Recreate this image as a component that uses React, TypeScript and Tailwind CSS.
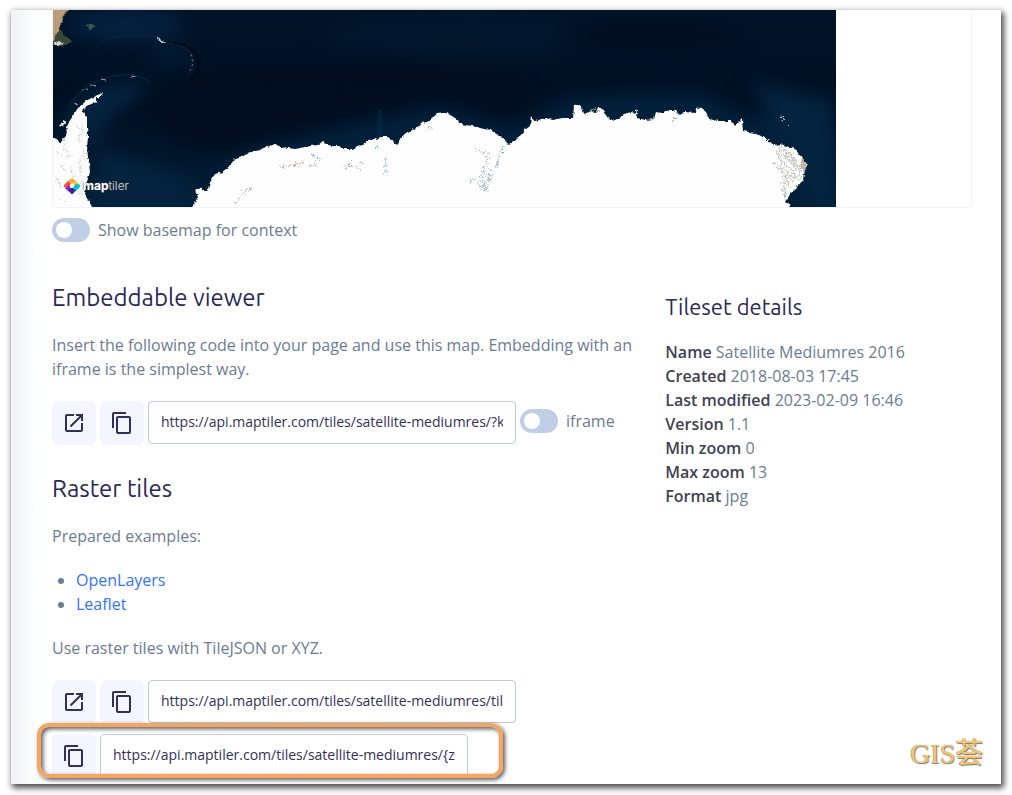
import React from "react";

const OPEN =
  "M19 19H5V5h7V3H5c-1.11 0-2 .9-2 2v14c0 1.1.89 2 2 2h14c1.1 0 2-.9 2-2v-7h-2v7zM14 3v2h3.59l-9.83 9.83 1.41 1.41L19 6.41V10h2V3h-7z";
const COPY =
  "M16 1H4c-1.1 0-2 .9-2 2v14h2V3h12V1zm3 4H8c-1.1 0-2 .9-2 2v14c0 1.1.9 2 2 2h11c1.1 0 2-.9 2-2V7c0-1.1-.9-2-2-2zm0 16H8V7h11v14z";

function IconButton({ label, path }: { label: string; path: string }) {
  return (
    <button
      type="button"
      aria-label={label}
      className="flex size-11 shrink-0 items-center justify-center rounded-md bg-[#f3f6ff] text-[#323058]"
    >
      <svg viewBox="0 0 24 24" className="size-6" fill="currentColor" aria-hidden="true">
        <path d={path} />
      </svg>
    </button>
  );
}

function UrlInput({ label, value }: { label: string; value: string }) {
  return (
    <input
      type="text"
      readOnly
      aria-label={label}
      defaultValue={value}
      className="h-[43px] w-[368px] min-w-0 rounded border border-[#b9cae4] bg-white px-3 pb-0.5 text-sm text-[#323058] outline-none"
    />
  );
}

function Switch({ id, label }: { id: string; label: string }) {
  return (
    <div className="flex items-center gap-2">
      <input
        id={id}
        type="checkbox"
        role="switch"
        className="flex h-6 w-[38px] shrink-0 appearance-none items-center rounded-full bg-[#c1cfe6] px-1 before:size-4 before:rounded-full before:bg-white before:content-['']"
      />
      <label htmlFor={id}>{label}</label>
    </div>
  );
}

function SatelliteMap() {
  return (
    <svg
      viewBox="53 10 783 197"
      className="block w-[783px] max-w-full"
      role="img"
      aria-label="Satellite map"
    >
      <defs>
        <linearGradient id="sea" x1="0" y1="0" x2="0" y2="1">
          <stop offset="0" stopColor="#021329" />
          <stop offset="0.5" stopColor="#010e20" />
          <stop offset="1" stopColor="#02203b" />
        </linearGradient>
        <filter id="soft" x="-50%" y="-50%" width="200%" height="200%" colorInterpolationFilters="sRGB">
          <feGaussianBlur stdDeviation="9" />
        </filter>
        <filter id="rough" x="-5%" y="-5%" width="110%" height="110%" colorInterpolationFilters="sRGB">
          <feTurbulence type="fractalNoise" baseFrequency="0.25" numOctaves="2" seed="4" result="n" />
          <feDisplacementMap in="SourceGraphic" in2="n" scale="4" xChannelSelector="R" yChannelSelector="G" />
          <feGaussianBlur stdDeviation="0.35" />
        </filter>
        <filter id="speckle" x="-5%" y="-5%" width="110%" height="110%" colorInterpolationFilters="sRGB">
          <feTurbulence type="fractalNoise" baseFrequency="0.4" numOctaves="2" seed="9" result="n" />
          <feDisplacementMap in="SourceGraphic" in2="n" scale="9" xChannelSelector="R" yChannelSelector="G" />
          <feGaussianBlur stdDeviation="0.5" />
        </filter>
      </defs>
      <rect x="53" y="10" width="783" height="197" fill="url(#sea)" />
      <g filter="url(#soft)">
        <ellipse cx="125" cy="25" rx="60" ry="16" fill="#04213f" />
        <path d="M60 125 Q80 80 145 80 L140 100 Q105 110 100 150 L95 210 H185 L190 180 L115 155Z" fill="#04233f" />
        <ellipse cx="170" cy="55" rx="24" ry="10" fill="#031c36" />
        <ellipse cx="250" cy="120" rx="90" ry="35" fill="#010d1f" />
        <path d="M205 175 L240 150 L325 130 L440 105 L510 128 L570 95 L700 90 L745 115 L840 140 V210 H805 L790 145Z" fill="#02203b" />
        <ellipse cx="470" cy="35" rx="150" ry="20" fill="#03172e" />
        <ellipse cx="350" cy="85" rx="170" ry="17" fill="#010c1e" />
        <ellipse cx="650" cy="35" rx="90" ry="15" fill="#010e20" />
        <path d="M750 80 L836 100 V207 H808Z" fill="#03233f" />
      </g>
      <g fill="none" strokeLinecap="round">
        <path d="M175 43 Q195 46 198 60 Q200 74 191 79" stroke="#000713" strokeWidth="3" opacity="0.7" />
        <path d="M100 42 Q125 31 155 37 M168 44 Q190 44 194 60 Q196 70 188 75" stroke="#0b2d4c" strokeWidth="1" opacity="0.6" />
        <path d="M191 55 L193 63 L190 71" stroke="#6d8798" strokeWidth="1" strokeDasharray="1 4" />
        <path d="M70 105 Q85 82 113 76 Q135 72 150 82" stroke="#143751" strokeWidth="1.5" opacity="0.4" />
        <path d="M379 137 L380 112" stroke="#083253" strokeWidth="5" opacity="0.4" />
      </g>
      <g filter="url(#rough)">
        <path d="M50 8H70L66 14L63 19L60 28L64 35L72 41L66 45L58 46L50 46Z" fill="#394936" />
        <path d="M50 8H70L64 14L62 20L58 31L53 40H50Z" fill="#b99d7b" />
        <path d="M54 42L60 41L64 43L58 46L53 45Z" fill="#d5d5cc" />
        <path d="M85 25L91 24L96 26L91 29Z" fill="#44534a" />
        <path d="M156 37L160 38L165 42L163 43L159 41Z" fill="#b3bfc6" />
        <path d="M131 76L136 77M101 79L106 80M91 85L96 86M82 90L88 89M74 103L79 105" stroke="#8e9ca3" strokeWidth="1" />
        <path d="M59 126L64 120L66 121L63 127Z" fill="#e8edef" />
        <path
          d="M50 137L55 138L59 143L62 141L66 136L67 126L72 117L78 108L86 101L95 96L103 93L101 96L96 99L97 102L88 105L82 111L87 117V128L88 136L87 150L89 163L90 172L86 185L85 195L94 210H50Z"
          fill="#fdfdfd"
        />
        <path
          d="M190 210L195 203L198 196L195 190L200 188L207 191L211 180L215 174L222 172L230 166L233 160L242 157L248 153L260 149L270 146L275 144L281 147L295 149L310 146L318 145L322 142L328 145L333 146L339 146L343 149L352 149L363 145L368 141L375 139L381 137L388 137L393 141L397 146L399 141L401 137L410 131L419 127L421 123L427 122L432 118L437 114L446 113L452 116L458 120L461 124L472 126L484 129L492 130L496 135L503 137L506 143L510 144L515 141L520 136L525 130L530 126L531 116L535 121L545 118L553 120L562 118L573 118L574 106L578 104L582 107L584 114L591 111L596 113L598 107L604 110L607 117L614 121L618 118L624 114L631 112L635 113L638 109L637 118L645 120L654 119L656 112L662 113L669 110L675 110L680 115L684 112L696 113L697 107L705 111L709 119L718 121L728 121L732 121L735 126L742 119L743 131L755 133L765 138L774 145L781 144L795 149L802 158L807 163L804 173L803 180L797 187L790 194L786 202L790 205L788 210Z"
          fill="#fefefe"
        />
        <path d="M802 158L807 163L804 172L800 167Z" fill="#c3b5a6" />
      </g>
      <g fill="none" filter="url(#speckle)" strokeWidth="1">
        <path
          d="M776 150L783 163M779 149L787 161M784 151L799 170M778 157L786 166L794 172M789 153L801 169M775 162L790 184M784 170L796 182M783 178L790 189M782 187L786 199M795 162L801 178M790 167L798 180M778 146L792 155"
          stroke="#b0b0b0"
        />
        <path d="M784 155L797 166M781 166L792 180M788 160L801 172M783 182L786 194M793 175L801 181" stroke="#d8d5d0" strokeWidth="2" />
        <path d="M56 150L62 156M64 143L68 158M78 124L80 143M83 120L82 135M59 163L66 172M79 158L81 178M54 175L62 188M70 165L74 178M58 196L64 202M82 180L81 195M84 150L84 160" stroke="#d0d1d2" />
        <path d="M281 167L290 165L298 164L304 162M306 165L312 166L316 162M343 169L350 166L358 168M352 162L348 166M477 151L489 153M487 155L488 163M587 114L594 109L600 112M427 130L432 126M240 195L253 187M236 202L243 196M672 121L677 116" stroke="#b5a99f" />
        <path d="M310 153L319 159M321 160L316 167M376 144L377 149M385 158L386 164L386 174M361 162L362 168M488 159L483 170L479 178M467 181L478 179L485 177M482 178L486 190M489 169L490 183M503 146L500 155L496 166M476 183L485 190M498 161L496 168" stroke="#8fb4c9" />
        <path d="M478 184L484 188M491 173V182M487 185L487 191M484 172L488 180L483 184" stroke="#b6aaa5" />
        <path d="M781 117L785 120M788 124L790 126" stroke="#cad6df" />
      </g>
    </svg>
  );
}

function MapLogo() {
  return (
    <div className="absolute bottom-3 left-2.5 flex items-center gap-0.5">
      <svg viewBox="0 0 18 18" className="size-[18px]" aria-hidden="true">
        <path d="M9 0L17 6.5Q19 9 16 12L9 18L2 12Q-1 9 1 6.5Z" fill="#fff" opacity="0.75" />
        <path d="M9 1L13 4L9 8L5 4Z" fill="#fbb03b" />
        <path d="M13 4L16.5 7.5L13 11L9 8Z" fill="#faca30" />
        <path d="M16.5 7.5Q18 9 16 11L13 14L9.5 10L13 7Z" fill="#05c3df" />
        <path d="M5 4L9 8L5 12L1.5 8Z" fill="#f9323f" />
        <path d="M4.5 4.5L1.5 7.5Q0 9 2 11L5 8L7 6Z" fill="#fb5632" />
        <path d="M5.5 8.5L9 12.5L5.5 14.5L2 11Z" fill="#8227db" />
        <path d="M9 10L13 13.5L9 17.5L5 13.5Z" fill="#35298e" />
        <path d="M9 10L13 14L10 11Z" fill="#3174dd" />
        <circle cx="9" cy="8.8" r="2.2" fill="#fff" />
      </svg>
      <span className="font-['Inter',sans-serif] text-xs leading-4 text-white [text-shadow:0_0_1px_#555,0_0_1px_#555]">
        <b className="font-bold">map</b>
        <span className="font-light text-[#bbc5cc]">tiler</span>
      </span>
    </div>
  );
}

const details = [
  ["Name", "Satellite Mediumres 2016"],
  ["Created", "2018-08-03 17:45"],
  ["Last modified", "2023-02-09 16:46"],
  ["Version", "1.1"],
  ["Min zoom", "0"],
  ["Max zoom", "13"],
  ["Format", "jpg"],
];

export default function App() {
  return (
    <div className="bg-white pt-2.5 pr-[11px] pb-[11px] pl-[11px] font-['Open_Sans',sans-serif] text-base leading-6 text-[#6b7c93]">
      <main className="relative bg-white bg-[linear-gradient(to_right,#f1f2f4,#fcfdfd_24px,#fff_42px)] pr-[29px] pb-1.5 pl-[41px] shadow-[2px_3px_6px_1px_rgba(0,0,0,0.7)]">
        <div className="relative rounded-b border-x border-b border-[#f0f2fc]">
          <SatelliteMap />
          <MapLogo />
        </div>
        <div className="mt-2.5">
          <Switch id="basemap" label="Show basemap for context" />
        </div>

        <div className="mt-[38px] grid grid-cols-[2fr_1fr]">
          <div className="min-w-0">
            <h2 className="font-['Ubuntu','Open_Sans',sans-serif] text-2xl leading-9 text-[#2b2a57]">Embeddable viewer</h2>
            <p className="mt-[17px]">
              Insert the following code into your page and use this map. Embedding with an iframe is the simplest way.
            </p>
            <div className="mt-5 flex items-start gap-1">
              <IconButton label="Open viewer" path={OPEN} />
              <IconButton label="Copy viewer link" path={COPY} />
              <UrlInput label="Viewer link" value="https://api.maptiler.com/tiles/satellite-mediumres/?key=" />
              <div className="pt-2">
                <Switch id="iframe" label="iframe" />
              </div>
            </div>

            <h2 className="mt-[26px] font-['Ubuntu','Open_Sans',sans-serif] text-2xl leading-9 text-[#2b2a57]">Raster tiles</h2>
            <p className="mt-[17px]">Prepared examples:</p>
            <ul className="mt-5 list-disc pl-6">
              <li>
                <a href="#openlayers" className="text-[#3174ff]">OpenLayers</a>
              </li>
              <li>
                <a href="#leaflet" className="text-[#3174ff]">Leaflet</a>
              </li>
            </ul>
            <p className="mt-5">Use raster tiles with TileJSON or XYZ.</p>
            <div className="mt-5 flex items-start gap-1">
              <IconButton label="Open TileJSON" path={OPEN} />
              <IconButton label="Copy TileJSON link" path={COPY} />
              <UrlInput label="TileJSON link" value="https://api.maptiler.com/tiles/satellite-mediumres/tiles.json" />
            </div>
            <div className="relative mt-2.5 w-fit">
              <div className="flex items-start gap-1">
                <IconButton label="Copy XYZ link" path={COPY} />
                <UrlInput label="XYZ link" value="https://api.maptiler.com/tiles/satellite-mediumres/{z}/{x}/{y}.jpg" />
              </div>
              <div className="pointer-events-none absolute -top-[11px] -right-[35px] bottom-0 -left-[15px] rounded-xl border-4 border-[#f5a562] shadow-[2px_2px_4px_rgba(0,0,0,0.65),inset_2px_2px_4px_rgba(0,0,0,0.65)]" />
            </div>
          </div>

          <aside className="pt-[11px]">
            <h3 className="font-['Ubuntu','Open_Sans',sans-serif] text-[22px] leading-8 text-[#2b2a57]">Tileset details</h3>
            <ul className="mt-[17px]">
              {details.map(([k, v]) => (
                <li key={k}>
                  <span className="font-semibold text-[#3e4252]">{k}</span> {v}
                </li>
              ))}
            </ul>
          </aside>
        </div>

        <div className="absolute right-[18px] bottom-3 font-['Liberation_Serif','Noto_Sans_CJK_SC',serif] text-[28px] leading-9 text-[#f6c66f] [text-shadow:1px_1px_1px_#777,0_0_1px_#777]">
          GIS荟
        </div>
      </main>
    </div>
  );
}
